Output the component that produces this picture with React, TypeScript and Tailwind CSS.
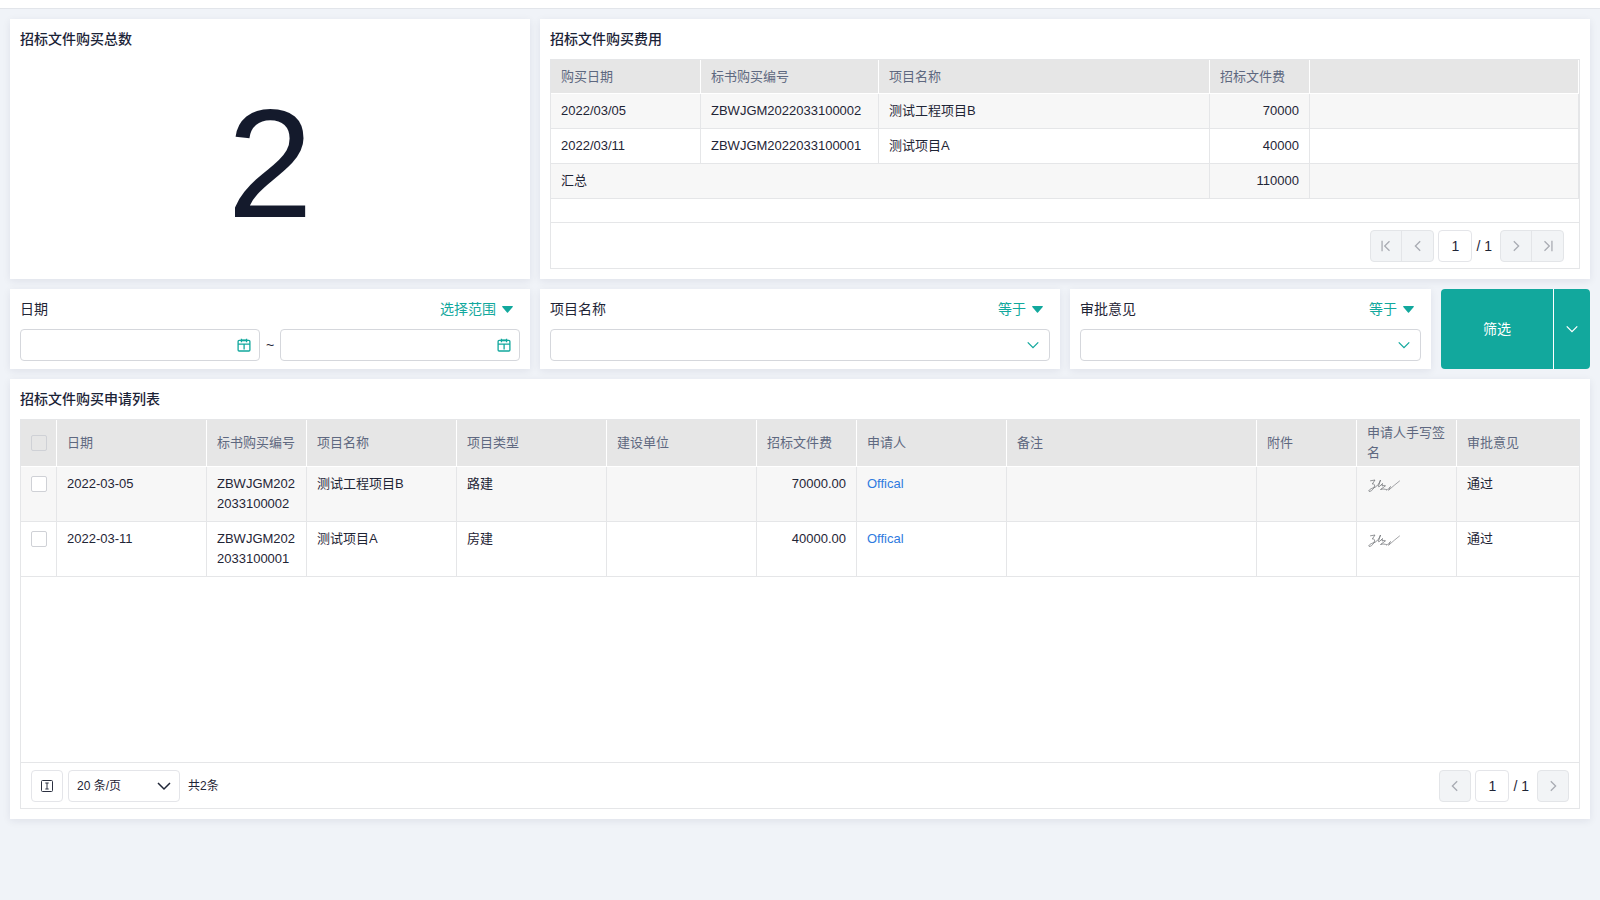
import type { ReactNode } from 'react';

function Card({ className = 'p-[10px]', children }: { className?: string; children: ReactNode }) {
  return <section className={`bg-white shadow-[0_2px_8px_rgba(30,30,60,0.08)] ${className}`}>{children}</section>;
}

function CardTitle({ children }: { children: ReactNode }) {
  return <h2 className="mb-[10px] text-sm/5 font-medium text-[#1b2337]">{children}</h2>;
}

function Chevron({ dir, className }: { dir: 'down' | 'left' | 'right' | 'first' | 'last'; className: string }) {
  const paths = {
    down: 'M2 5 8 11l6-6',
    left: 'M10.5 2.5 5 8l5.5 5.5',
    right: 'M5.5 2.500 11 8l-5.5 5.500',
    first: 'M3.500 2v12M12 2.500 6.500 8l5.500 5.500',
    last: 'M12.500 2v12M4 2.500 9.500 8 4 13.500',
  };
  return (
    <svg viewBox="0 0 16 16" aria-hidden="true" className={className} fill="none" stroke="currentColor" strokeWidth="1.5">
      <path d={paths[dir]} />
    </svg>
  );
}

function CalendarIcon() {
  return (
    <svg viewBox="0 0 14 14" aria-hidden="true" className="size-[14px] text-[#12a89d]" fill="none" stroke="currentColor" strokeWidth="1.3">
      <rect x="1.1" y="2.4" width="11.8" height="10.6" rx="1" />
      <path d="M1 6.1h12M4.4.8v3.400M9.600.8v3.400M7.100 6v5.500" />
      <path d="M4.400 2.400h5.200" strokeWidth="1.800" />
    </svg>
  );
}

function Operator({ text }: { text: string }) {
  return (
    <button type="button" className="flex items-center gap-[6px] pr-[7px] text-sm/5 text-[#12a89d]">
      {text}
      <svg viewBox="0 0 11 7" aria-hidden="true" className="mt-px h-[7px] w-[11px] fill-[#12a89d]">
        <path d="M.8 0h9.400a.6.600 0 0 1 .500 1L6 6.400a.7.700 0 0 1-1 0L.3 1a.6.600 0 0 1 .5-1z" />
      </svg>
    </button>
  );
}

function DateBox({ label }: { label: string }) {
  return (
    <div className="flex h-8 min-w-0 flex-1 items-center rounded border border-[#d5d7dc] pr-2">
      <input type="text" aria-label={label} className="h-full min-w-0 flex-1 bg-transparent px-2 text-sm outline-none" />
      <CalendarIcon />
    </div>
  );
}

function SelectFilter({ id, label }: { id: string; label: string }) {
  return (
    <Card className="min-w-0 flex-1 px-[10px] pt-[10px] pb-2">
      <div className="mb-[10px] flex justify-between">
        <label htmlFor={id} className="text-sm/5">{label}</label>
        <Operator text="等于" />
      </div>
      <div className="grid items-center">
        <select id={id} defaultValue="" className="col-start-1 row-start-1 h-8 w-full appearance-none rounded border border-[#d5d7dc] bg-white px-2 text-sm outline-none">
          <option value=""></option>
        </select>
        <Chevron dir="down" className="pointer-events-none col-start-1 row-start-1 mr-[10px] size-[14px] justify-self-end text-[#12a89d]" />
      </div>
    </Card>
  );
}

function PageInput({ label }: { label: string }) {
  return (
    <>
      <input type="text" defaultValue="1" aria-label={label} className="mx-1 h-8 w-[34px] rounded border border-[#e4e5e9] text-center text-sm outline-none" />
      <span className="mr-2 text-sm">/ 1</span>
    </>
  );
}

const PAGE_BTN = 'flex size-8 items-center justify-center rounded border border-[#e3e5e8] bg-[#f2f4f6] text-[#a9acb3]';
const GROUP = 'flex h-8 divide-x divide-[#e3e5e8] overflow-hidden rounded border border-[#e3e5e8] bg-[#f2f4f6] text-[#a9acb3]';
const GROUP_BTN = 'flex w-[31px] items-center justify-center';

function GroupButton({ dir, label }: { dir: 'left' | 'right' | 'first' | 'last'; label: string }) {
  return (
    <button type="button" disabled aria-label={label} className={GROUP_BTN}>
      <Chevron dir={dir} className="size-[14px]" />
    </button>
  );
}

const TH = 'border-r border-b border-white bg-[#e6e6e6] px-[10px] text-left font-normal text-[#5e6880]';
const TD = 'border-r border-b border-[#e5e6e8] px-[10px]';

function FeeTable() {
  const rows = [
    { date: '2022/03/05', code: 'ZBWJGM2022033100002', name: '测试工程项目B', fee: '70000' },
    { date: '2022/03/11', code: 'ZBWJGM2022033100001', name: '测试项目A', fee: '40000' },
  ];
  return (
    <table className="w-full table-fixed border-separate border-spacing-0 text-[13px]/5">
      <colgroup>
        <col className="w-[150px]" />
        <col className="w-[178px]" />
        <col className="w-[331px]" />
        <col className="w-[100px]" />
        <col />
      </colgroup>
      <thead>
        <tr className="h-[34px]">
          <th className={TH}>购买日期</th>
          <th className={TH}>标书购买编号</th>
          <th className={TH}>项目名称</th>
          <th className={TH}>招标文件费</th>
          <th className={TH}></th>
        </tr>
      </thead>
      <tbody>
        {rows.map((r) => (
          <tr key={r.code} className="h-[35px] odd:bg-[#f7f7f7]">
            <td className={TD}>{r.date}</td>
            <td className={TD}>{r.code}</td>
            <td className={TD}>{r.name}</td>
            <td className={`${TD} text-right`}>{r.fee}</td>
            <td className={TD}></td>
          </tr>
        ))}
        <tr className="h-[35px] bg-[#f7f7f7]">
          <td colSpan={3} className={TD}>汇总</td>
          <td className={`${TD} text-right`}>110000</td>
          <td className={TD}></td>
        </tr>
      </tbody>
    </table>
  );
}

function Signature() {
  return (
    <svg viewBox="0 0 34 14" role="img" aria-label="签名" className="mt-[5px] h-[14px] w-[34px]" fill="none" stroke="#66686d" strokeWidth="0.7" strokeLinejoin="round" strokeLinecap="round">
      <path d="M3.500 1.800 8 1 5.300 5C7.500 4.800 8.300 6 7 8.500 5.800 11 3.500 12.800 2 12.300 1 11.500 3.500 9.500 8 8.300 10.500 7 12.500 4 13.500 1L11.500 7C11.300 8.200 12 8 13 7L15.500 4.500 15 7C16.500 6.300 18 6.300 18.500 6.800L13.500 10.500C16 9.800 18 9.800 19.500 10.800" />
      <path d="M19.500 10.800C21 10.500 22.500 9 23.500 7.500L21.500 11.300C25.500 8 29 4.500 32.500 2" strokeWidth="0.6" />
    </svg>
  );
}

const CHECK = 'block size-4 appearance-none rounded-xs border border-[#cfd1d6]';

function ListTable() {
  const headers = ['日期', '标书购买编号', '项目名称', '项目类型', '建设单位', '招标文件费', '申请人', '备注', '附件', '申请人手写签名'];
  const rows = [
    { date: '2022-03-05', code: 'ZBWJGM2022033100002', name: '测试工程项目B', kind: '路建', fee: '70000.00' },
    { date: '2022-03-11', code: 'ZBWJGM2022033100001', name: '测试项目A', kind: '房建', fee: '40000.00' },
  ];
  const cell = `${TD} py-[7px]`;
  return (
    <table className="w-full table-fixed border-separate border-spacing-0 text-[13px]/5">
      <colgroup>
        <col className="w-[36px]" />
        <col className="w-[150px]" />
        <col className="w-[100px]" />
        <col className="w-[150px]" />
        <col className="w-[150px]" />
        <col className="w-[150px]" />
        <col className="w-[100px]" />
        <col className="w-[150px]" />
        <col className="w-[250px]" />
        <col className="w-[100px]" />
        <col className="w-[100px]" />
        <col />
      </colgroup>
      <thead>
        <tr className="h-[47px]">
          <th className={TH}>
            <input type="checkbox" disabled aria-label="全选" className={CHECK} />
          </th>
          {headers.map((h) => (
            <th key={h} className={TH}>{h}</th>
          ))}
          <th className={`${TH} border-r-0`}>审批意见</th>
        </tr>
      </thead>
      <tbody>
        {rows.map((r) => (
          <tr key={r.code} className="h-[55px] align-top odd:bg-[#f7f7f7]">
            <td className={`${TD} py-[9px]`}>
              <input type="checkbox" aria-label={`选择 ${r.code}`} className={`${CHECK} bg-white`} />
            </td>
            <td className={cell}>{r.date}</td>
            <td className={`${cell} break-all`}>{r.code}</td>
            <td className={cell}>{r.name}</td>
            <td className={cell}>{r.kind}</td>
            <td className={cell}></td>
            <td className={`${cell} text-right`}>{r.fee}</td>
            <td className={cell}>
              <a href="#applicant" className="text-[#2f7be0]">Offical</a>
            </td>
            <td className={cell}></td>
            <td className={cell}></td>
            <td className={cell}>
              <Signature />
            </td>
            <td className={`${cell} border-r-0`}>通过</td>
          </tr>
        ))}
      </tbody>
    </table>
  );
}

export default function App() {
  return (
    <div className="min-h-screen bg-[#f0f3f8] font-['Liberation_Sans','Noto_Sans_CJK_SC',sans-serif] text-[#1f2536]">
      <div className="h-[9px] border-b border-[#e2e5ea] bg-white" />
      <main className="flex flex-col gap-[10px] p-[10px]">
        <div className="grid grid-cols-3 gap-[10px]">
          <Card className="flex h-[260px] flex-col p-[10px]">
            <CardTitle>招标文件购买总数</CardTitle>
            <p className="flex flex-1 items-center justify-center text-[154px]/[180px] text-[#141a2c]">2</p>
          </Card>
          <Card className="col-span-2 flex h-[260px] flex-col p-[10px]">
            <CardTitle>招标文件购买费用</CardTitle>
            <div className="flex flex-1 flex-col border border-[#e5e6e8]">
              <div className="flex-1">
                <FeeTable />
              </div>
              <div className="flex h-[46px] items-center justify-end border-t border-[#e5e6e8] pr-[15px]">
                <div className={GROUP}>
                  <GroupButton dir="first" label="第一页" />
                  <GroupButton dir="left" label="上一页" />
                </div>
                <PageInput label="费用表页码" />
                <div className={GROUP}>
                  <GroupButton dir="right" label="下一页" />
                  <GroupButton dir="last" label="最后一页" />
                </div>
              </div>
            </div>
          </Card>
        </div>

        <div className="grid grid-cols-3 gap-[10px]">
          <Card className="px-[10px] pt-[10px] pb-2">
            <div className="mb-[10px] flex justify-between">
              <span className="text-sm/5">日期</span>
              <Operator text="选择范围" />
            </div>
            <div className="flex items-center">
              <DateBox label="开始日期" />
              <span className="w-5 text-center text-sm">~</span>
              <DateBox label="结束日期" />
            </div>
          </Card>
          <SelectFilter id="project-name" label="项目名称" />
          <div className="flex gap-[10px]">
            <SelectFilter id="approval" label="审批意见" />
            <div className="flex w-[149px] gap-px overflow-hidden rounded bg-white text-white">
              <button type="button" className="flex-1 bg-[#12a89d] text-sm">筛选</button>
              <button type="button" aria-label="更多筛选" className="flex w-9 items-center justify-center bg-[#12a89d]">
                <Chevron dir="down" className="size-[14px]" />
              </button>
            </div>
          </div>
        </div>

        <Card className="flex h-[440px] flex-col p-[10px]">
          <CardTitle>招标文件购买申请列表</CardTitle>
          <div className="flex flex-1 flex-col border border-[#e5e6e8]">
            <div className="flex-1">
              <ListTable />
            </div>
            <div className="flex h-[46px] items-center border-t border-[#e5e6e8] px-[10px] text-xs">
              <button type="button" aria-label="行高" className="mr-[5px] flex size-8 items-center justify-center rounded border border-[#e4e5e9]">
                <svg viewBox="0 0 12 12" aria-hidden="true" className="size-3" fill="none" stroke="#2b3040" strokeWidth="1">
                  <rect x="0.5" y="0.5" width="11" height="11" rx="1" />
                  <path d="M6 3v6M4.300 3h3.400M4.300 9h3.400" />
                </svg>
              </button>
              <div className="grid w-28 items-center">
                <select aria-label="每页条数" className="col-start-1 row-start-1 h-8 appearance-none rounded border border-[#e4e5e9] bg-white px-2 text-xs outline-none">
                  <option>20 条/页</option>
                </select>
                <Chevron dir="down" className="pointer-events-none col-start-1 row-start-1 mr-2 size-4 justify-self-end text-[#1f2536]" />
              </div>
              <span className="ml-2">共2条</span>
              <div className="ml-auto flex items-center">
                <button type="button" disabled aria-label="上一页" className={PAGE_BTN}>
                  <Chevron dir="left" className="size-[14px]" />
                </button>
                <PageInput label="列表页码" />
                <button type="button" disabled aria-label="下一页" className={PAGE_BTN}>
                  <Chevron dir="right" className="size-[14px]" />
                </button>
              </div>
            </div>
          </div>
        </Card>
      </main>
    </div>
  );
}
